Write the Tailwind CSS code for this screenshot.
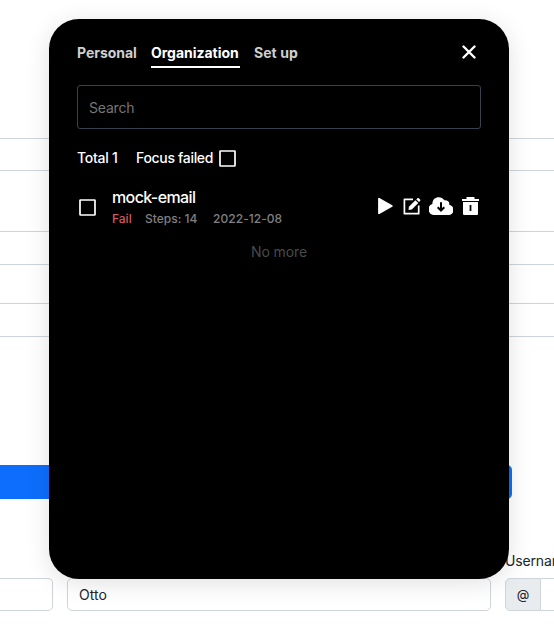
<!DOCTYPE html>
<html lang="en">
<head>
<meta charset="utf-8">
<title>Cases</title>
<script src="https://cdn.jsdelivr.net/npm/@tailwindcss/browser@4"></script>
</head>
<body class="relative h-[630px] w-[554px] overflow-hidden bg-white font-['Inter',sans-serif] text-[14px] whitespace-nowrap text-[#212529]">
<!-- form behind the dialog -->
<div class="flex flex-col pt-[138px]">
  <div class="h-[33px] border-y border-[#ced4da]"></div>
  <div class="mt-[60px] h-[34px] border-y border-[#ced4da]"></div>
  <div class="mt-[38px] h-[34px] border-y border-[#ced4da]"></div>
  <div class="mt-[128px] h-[34px] w-[512px] rounded-r-[5px] bg-[#0d6efd]"></div>
  <div class="mt-[52px] flex h-5 items-center pl-[505px] leading-5 tracking-[-0.15px]">Username</div>
  <div class="mt-[7px] flex h-[33px]">
    <div class="w-[53px] shrink-0 rounded-r-[5px] border border-l-0 border-[#ced4da]"></div>
    <div class="ml-[14px] flex w-[424px] shrink-0 items-center rounded-[5px] border border-[#ced4da] pl-[11px]">Otto</div>
    <div class="ml-[14px] flex w-[36px] shrink-0 items-center justify-center rounded-l-[5px] border border-[#ced4da] bg-[#e9ecef] text-[13px]">@</div>
    <div class="flex-1 border-y border-[#ced4da]"></div>
  </div>
</div>
<!-- dialog -->
<div class="absolute top-[19px] left-[49px] flex h-[560px] w-[460px] flex-col rounded-[30px] bg-black px-7 text-white shadow-[0_4px_24px_rgba(0,0,0,0.12)]">
  <div class="flex h-[66px] justify-between pt-6">
    <div class="flex gap-[14px] font-bold text-[#cfcfcf]">
      <div class="h-[25px] w-[60px] leading-5 tracking-[-0.03px]">Personal</div>
      <div class="h-[25px] w-[89px] border-b-2 border-white leading-5 tracking-[-0.02px] text-white">Organization</div>
      <div class="h-[25px] w-[45px] leading-5 tracking-[0.05px]">Set up</div>
    </div>
    <svg class="mt-[2px] mr-[5px] h-[14px] w-[14px]" viewBox="0 0 14 14" fill="none" stroke="white" stroke-width="2.4" stroke-linecap="round"><path d="M1.5 1.5 12.5 12.5M12.5 1.5 1.5 12.5"/></svg>
  </div>
  <div class="flex h-[44px] items-center rounded-[3px] border border-[#374151] pl-[11px] tracking-[-0.2px] text-[#757575]">Search</div>
  <div class="mt-[18px] flex h-5 items-center font-medium">
    <span class="w-[59px] tracking-[-0.25px]">Total 1</span>
    <span class="w-[83px] tracking-[-0.32px]">Focus failed</span>
    <svg class="mt-[2px] h-[17px] w-[17px]" viewBox="0 0 17 17" fill="none" stroke="white" stroke-width="1.7"><rect x="1" y="1" width="15" height="15" rx=".5"/></svg>
  </div>
  <div class="mt-[19px] flex h-[44px]">
    <svg class="mt-[13px] ml-[2px] h-[17px] w-[17px]" viewBox="0 0 17 17" fill="none" stroke="white" stroke-width="1.7"><rect x="1" y="1" width="15" height="15" rx=".5"/></svg>
    <div class="ml-4 flex flex-1 flex-col">
      <div class="-mt-px h-[25px] text-[16px] leading-6 font-medium tracking-[-0.6px]">mock-email</div>
      <div class="flex h-[18px] text-[12px] leading-[18px] font-medium text-[#808080]">
        <span class="w-[33px] text-[#d35a5a]">Fail</span>
        <span class="w-[68px]">Steps: 14</span>
        <span class="tracking-[0.05px]">2022-12-08</span>
      </div>
    </div>
    <div class="mr-[1px] flex h-[20px] gap-[9px] pt-[11px]">
      <svg class="mr-[1px] h-[18px] w-[15px] shrink-0" viewBox="0 0 15 18" fill="white" stroke="white" stroke-width="1.8" stroke-linejoin="round"><path d="M1 1.8V16.2L13.8 9Z"/></svg>
      <svg class="h-[18px] w-[18px] shrink-0" viewBox="0 0 18 18" fill="none"><path d="M10 2.3H1.4V16.7H15.7V8.5" stroke="white" stroke-width="1.7" stroke-linejoin="round"/><path d="M5.5 13 5.9 9.7 12.4 3.2 15.3 6 8.8 12.5Z" fill="white"/><path d="M13.3 2.4 14.4 1.3Q15.1.7 15.8 1.3L17.1 2.6Q17.8 3.3 17.1 4L16 5.1Z" fill="white"/></svg>
      <svg class="-ml-[1px] h-[18px] w-[24px] shrink-0" viewBox="0 0 24 18"><path d="M20.2 7.7C20.9 5.2 19 3.1 15.4 3.3 12-1.6 3.2-.4 3.4 7.1A5.6 5.6 0 0 0 5.6 18H18.8A5.2 5.2 0 0 0 20.2 7.7Z" fill="white"/><path d="M12 5.2V13M8.7 10.2 12 13.5 15.3 10.2" stroke="black" stroke-width="2" fill="none"/></svg>
      <svg class="h-[18px] w-[18px] shrink-0" viewBox="0 0 18 18"><path d="M4.5 0H12.5V2H17V4H0V2H4.5ZM1 5H16V17Q16 18 15 18H2Q1 18 1 17Z" fill="white"/><path d="M8.5 8V14" stroke="black" stroke-width="1.8"/></svg>
    </div>
  </div>
  <div class="mt-[12px] text-center leading-5 tracking-[-0.1px] text-[#4a4a4a]">No more</div>
</div>
</body>
</html>
